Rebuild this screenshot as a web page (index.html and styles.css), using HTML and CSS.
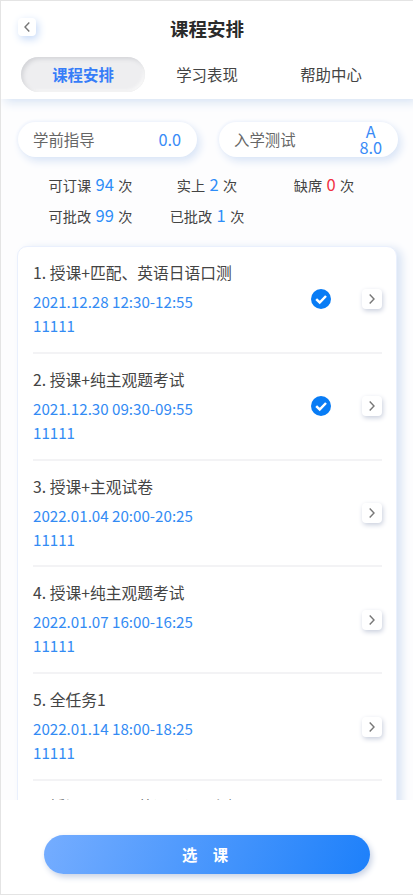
FILE: index.html
```
<!DOCTYPE html>
<html lang="zh-CN">
<head>
<meta charset="utf-8">
<title>课程安排</title>
<link rel="stylesheet" href="styles.css">
</head>
<body>
<div class="app">
  <header class="header">
    <div class="titlebar">
      <button class="square back"><svg width="8" height="12" viewBox="0 0 8 12"><path d="M6.3 1.5 2 6l4.300 4.500"/></svg></button>
      <h1>课程安排</h1>
    </div>
    <nav class="tabs">
      <a class="tab active">课程安排</a>
      <a class="tab">学习表现</a>
      <a class="tab">帮助中心</a>
    </nav>
  </header>
  <main class="content">
    <div class="scores">
      <div class="pill"><span>学前指导</span><span class="score">0.0</span></div>
      <div class="pill"><span>入学测试</span><span class="score"><span>A</span><span>8.0</span></span></div>
    </div>
    <div class="stats">
      <span>可订课 <b>94</b> 次</span><span>实上 <b>2</b> 次</span><span>缺席 <b class="red">0</b> 次</span>
      <span>可批改 <b>99</b> 次</span><span>已批改 <b>1</b> 次</span>
    </div>
    <section class="card">
      <article class="lesson">
        <div class="info"><h2>1. 授课+匹配、英语日语口测</h2><p class="date">2021.12.28 12:30-12:55</p><p>11111</p></div>
        <svg class="check" width="22" height="22" viewBox="0 0 22 22"><circle cx="11" cy="11" r="10"/><path d="M6.200 11.200 9.700 14.500 16 8"/></svg>
        <button class="square"><svg width="8" height="12" viewBox="0 0 8 12"><path d="M1.700 1.500 6 6l-4.300 4.500"/></svg></button>
      </article>
      <article class="lesson">
        <div class="info"><h2>2. 授课+纯主观题考试</h2><p class="date">2021.12.30 09:30-09:55</p><p>11111</p></div>
        <svg class="check" width="22" height="22" viewBox="0 0 22 22"><circle cx="11" cy="11" r="10"/><path d="M6.200 11.200 9.700 14.500 16 8"/></svg>
        <button class="square"><svg width="8" height="12" viewBox="0 0 8 12"><path d="M1.700 1.500 6 6l-4.300 4.500"/></svg></button>
      </article>
      <article class="lesson">
        <div class="info"><h2>3. 授课+主观试卷</h2><p class="date">2022.01.04 20:00-20:25</p><p>11111</p></div>
        <button class="square"><svg width="8" height="12" viewBox="0 0 8 12"><path d="M1.700 1.500 6 6l-4.300 4.500"/></svg></button>
      </article>
      <article class="lesson">
        <div class="info"><h2>4. 授课+纯主观题考试</h2><p class="date">2022.01.07 16:00-16:25</p><p>11111</p></div>
        <button class="square"><svg width="8" height="12" viewBox="0 0 8 12"><path d="M1.700 1.500 6 6l-4.300 4.500"/></svg></button>
      </article>
      <article class="lesson">
        <div class="info"><h2>5. 全任务1</h2><p class="date">2022.01.14 18:00-18:25</p><p>11111</p></div>
        <button class="square"><svg width="8" height="12" viewBox="0 0 8 12"><path d="M1.700 1.500 6 6l-4.300 4.500"/></svg></button>
      </article>
      <article class="lesson">
        <div class="info"><h2>6. 授课+匹配、英语日语口测</h2></div>
      </article>
    </section>
  </main>
  <footer class="footer"><button class="submit">选&emsp;课</button></footer>
</div>
</body>
</html>
```
FILE: styles.css
```
* { box-sizing: border-box; margin: 0; padding: 0; }
body { background: #fff; font-family: "Noto Sans CJK SC", sans-serif; font-size: 15.4px; color: #444; }
button { border: 0; font: inherit; }
.app { width: 413px; height: 895px; display: flex; flex-direction: column; overflow: hidden; border: solid #e4e4e4; border-width: 1px 0 1px 1px; }
.header { height: 98px; flex: none; background: #fff; box-shadow: 4px 3px 10px #d5e2f3; z-index: 1; }
.titlebar { height: 56px; display: grid; grid-template-columns: 60px 1fr 60px; align-items: center; }
h1 { grid-column: 2; text-align: center; font-size: 18.5px; line-height: 24px; margin-top: -2px; color: #2b2b2b; font-weight: 700; }
.square { width: 20px; height: 20px; flex: none; display: flex; align-items: center; justify-content: center; background: #fff; border-radius: 4px; box-shadow: 1px 2px 5px #c9cfdd; }
.square svg { fill: none; stroke: #777; stroke-width: 1.4; }
.back { width: 18px; height: 18px; margin: -4px 0 0 17px; box-shadow: 2px 3px 8px #c4d8f7; }
.tabs { display: grid; grid-template-columns: repeat(3, 124px); padding-left: 20px; }
.tab { height: 35px; line-height: 35px; text-align: center; border-radius: 18px; }
.active { color: #367df8; font-weight: 700; background: #eeeef0; box-shadow: inset 2px 2px 4px #d2d3d7, inset -2px -2px 3px #f8f8f8; }
.content { height: 701px; flex: none; overflow: hidden; background: #fdfdfe; padding: 23px 16px 0 17px; }
.scores { display: flex; gap: 22px; }
.pill { width: 179px; height: 35px; flex: none; display: flex; align-items: center; justify-content: space-between; padding: 0 16px 1px 15px; border-radius: 18px; background: #fff; color: #666; box-shadow: 3px 4px 9px #d8e4f6, -1px -1px 3px #f0f4fc; }
.score { display: flex; flex-direction: column; align-items: center; color: #398bf7; font-size: 16.3px; line-height: 16px; }
.stats { display: grid; grid-template-columns: 145px 88px 146px; grid-auto-rows: 31px; margin-top: 13px; font-size: 14.2px; line-height: 31px; text-align: center; white-space: nowrap; word-spacing: 1.2px; }
.stats b { font-size: 16.5px; font-weight: 400; line-height: 1; color: #2e8df8; }
.stats .red { color: #f13042; }
.card { width: 380px; margin: 14px 0 0 -1px; height: 620px; background: #fff; border: 1px solid #eaf0fd; border-radius: 10px; padding: 0 14px 0 15px; box-shadow: 5px 2px 9px #d9e4f4; }
.lesson { height: 106.8px; display: flex; align-items: center; border-bottom: 2px solid #f3f3f5; }
.info { flex: 1; align-self: flex-start; padding-top: 13px; color: #338bf4; }
h2 { font-size: 15.75px; font-weight: 400; line-height: 26px; color: #444; white-space: nowrap; }
.info p { font-size: 15.15px; line-height: 24px; }
.info .date { padding-top: 3px; line-height: 24px; }
.check { margin-right: 30px; }
.check circle { fill: #087cf5; }
.check path { fill: none; stroke: #fff; stroke-width: 2.5; }
.footer { flex: 1; padding: 35px 0 0 43px; }
.submit { width: 326px; height: 39px; padding: 0 4px 2px 0; border-radius: 20px; background: linear-gradient(110deg, #75adff, #1d80fa); color: #fff; font-size: 15.4px; font-weight: 700; box-shadow: 2px 3px 6px #c7d1e4; }
```
